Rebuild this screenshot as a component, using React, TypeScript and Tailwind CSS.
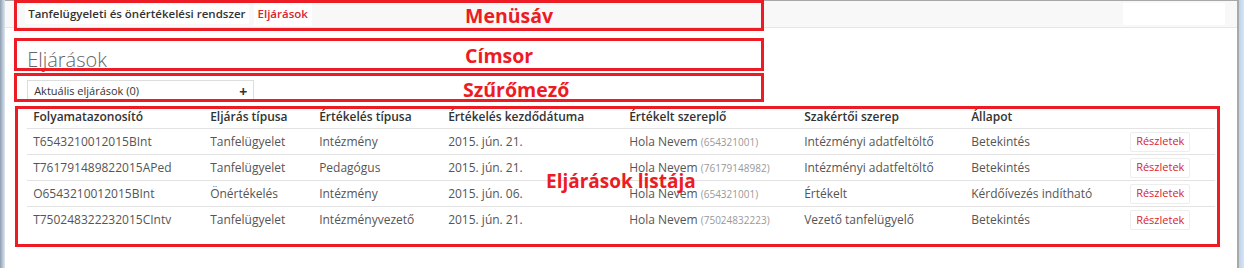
const rows = [
  {
    id: "T6543210012015BInt",
    eljaras: "Tanfelügyelet",
    ertekeles: "Intézmény",
    datum: "2015. jún. 21.",
    nev: "Hola Nevem",
    kod: "654321001",
    szerep: "Intézményi adatfeltöltő",
    allapot: "Betekintés",
  },
  {
    id: "T761791489822015APed",
    eljaras: "Tanfelügyelet",
    ertekeles: "Pedagógus",
    datum: "2015. jún. 21.",
    nev: "Hola Nevem",
    kod: "76179148982",
    szerep: "Intézményi adatfeltöltő",
    allapot: "Betekintés",
  },
  {
    id: "O6543210012015BInt",
    eljaras: "Önértékelés",
    ertekeles: "Intézmény",
    datum: "2015. jún. 06.",
    nev: "Hola Nevem",
    kod: "654321001",
    szerep: "Értékelt",
    allapot: "Kérdőívezés indítható",
  },
  {
    id: "T750248322232015CIntv",
    eljaras: "Tanfelügyelet",
    ertekeles: "Intézményvezető",
    datum: "2015. jún. 21.",
    nev: "Hola Nevem",
    kod: "75024832223",
    szerep: "Vezető tanfelügyelő",
    allapot: "Betekintés",
  },
];

const cols =
  "grid grid-cols-[177px_109px_129px_181px_175px_167px_159px_1fr] items-center";

export default function App() {
  return (
    <div className="relative flex h-[268px] w-[1244px] overflow-hidden bg-white font-['Open_Sans','Liberation_Sans',sans-serif]">
      {/* window frame left */}
      <div className="w-[6px] bg-gradient-to-r from-[#8d9caf] via-[#b7c4d3] to-[#dfe5ec]" />

      {/* page */}
      <div className="flex flex-1 flex-col border-t-[1px] border-[#a8a8a8]">
        {/* Menüsáv */}
        <div className="flex h-[27px] items-center border-b border-[#e7e7e7] bg-[#f8f8f8] pl-[20px] pr-[12px]">
          <div className="flex h-[20px] items-center rounded-[3px] bg-white px-[3px] text-[11.5px] font-semibold text-[#333]">
            Tanfelügyeleti és önértékelési rendszer
          </div>
          <div className="ml-[5px] flex h-[24px] items-center bg-white px-[4px] text-[11.5px] font-semibold text-[#d9232d]">
            Eljárások
          </div>
          <div className="ml-auto h-[22px] w-[102px] bg-white" />
        </div>

        <div className="px-[22px]">
          {/* Címsor */}
          <h1 className="mt-[18px] h-[28px] text-[20px] leading-[28px] font-light text-[#666]">
            Eljárások
          </h1>

          {/* Szűrőmező */}
          <div className="mt-[6px] flex h-[22px] w-[227px] items-center justify-between border border-b-0 border-[#ddd] pl-[6px] pr-[6px] text-[11px] text-[#333]">
            <span>Aktuális eljárások (0)</span>
            <span className="text-[14px] font-bold leading-none">+</span>
          </div>

          {/* Eljárások listája */}
          <div className="mt-[4px] w-[1188px] text-[12px]">
            <div className={`${cols} h-[23px] border-b border-[#e3e3e3] font-semibold text-[#333]`}>
              <div className="pl-[6px]">Folyamatazonosító</div>
              <div className="pl-[6px]">Eljárás típusa</div>
              <div className="pl-[6px]">Értékelés típusa</div>
              <div className="pl-[6px]">Értékelés kezdődátuma</div>
              <div className="pl-[6px]">Értékelt szereplő</div>
              <div className="pl-[6px]">Szakértői szerep</div>
              <div className="pl-[6px]">Állapot</div>
              <div />
            </div>
            {rows.map((r, i) => (
              <div
                key={r.id}
                className={`${cols} h-[26px] text-[#555] ${i < rows.length - 1 ? "border-b border-[#e3e3e3]" : ""}`}
              >
                <div className="pl-[6px]">{r.id}</div>
                <div className="pl-[6px]">{r.eljaras}</div>
                <div className="pl-[6px]">{r.ertekeles}</div>
                <div className="pl-[6px]">{r.datum}</div>
                <div className="pl-[6px]">
                  {r.nev} <span className="text-[10px] text-[#999]">({r.kod})</span>
                </div>
                <div className="pl-[6px]">{r.szerep}</div>
                <div className="pl-[6px]">{r.allapot}</div>
                <div className="pl-[6px]">
                  <span className="inline-flex h-[20px] items-center rounded-[2px] border border-[#eee] bg-white px-[5px] text-[11px] text-[#d9232d]">
                    Részletek
                  </span>
                </div>
              </div>
            ))}
          </div>
        </div>
      </div>

      {/* scrollbar */}
      <div className="w-[2px] bg-[#a9a9a9]" />
      <div className="w-[6px] bg-gradient-to-r from-[#bcd3ec] to-[#d8e6f5]" />

      {/* annotation overlays */}
      <div className="pointer-events-none absolute left-[14px] top-0 h-[31px] w-[750px] border-[3px] border-[#ed1c24]" />
      <div className="pointer-events-none absolute left-[465px] top-[3px] text-[19.5px] font-bold leading-[26px] text-[#ed1c24]">
        Menüsáv
      </div>
      <div className="pointer-events-none absolute left-[14px] top-[38px] h-[33px] w-[750px] border-[3px] border-[#ed1c24]" />
      <div className="pointer-events-none absolute left-[465px] top-[43px] text-[19.5px] font-bold leading-[26px] text-[#ed1c24]">
        Címsor
      </div>
      <div className="pointer-events-none absolute left-[14px] top-[73px] h-[29px] w-[750px] border-[3px] border-[#ed1c24]" />
      <div className="pointer-events-none absolute left-[463px] top-[77px] text-[19.5px] font-bold leading-[26px] text-[#ed1c24]">
        Szűrőmező
      </div>
      <div className="pointer-events-none absolute left-[15px] top-[106px] h-[141px] w-[1205px] border-[3px] border-[#ed1c24]" />
      <div className="pointer-events-none absolute left-[546px] top-[168px] text-[19px] font-bold leading-[26px] text-[#ed1c24]">
        Eljárások listája
      </div>
    </div>
  );
}
